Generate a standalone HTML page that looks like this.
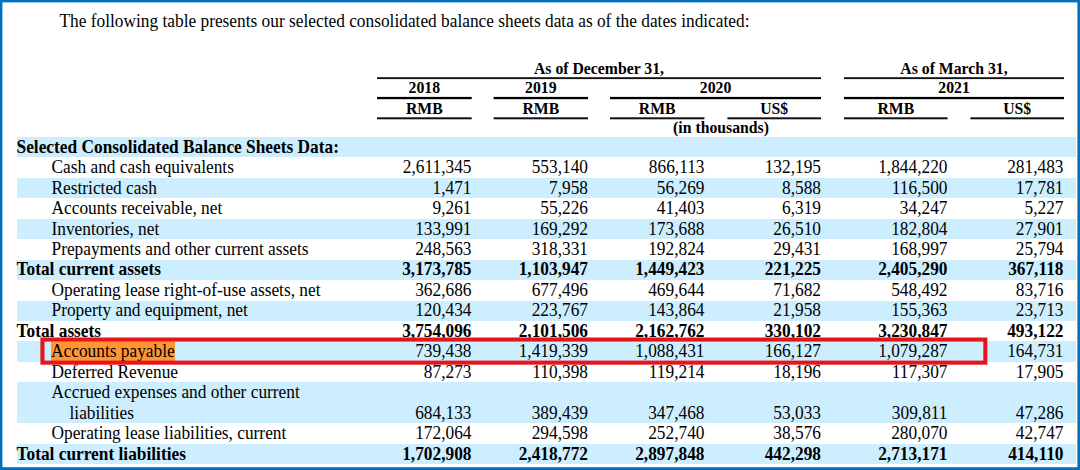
<!DOCTYPE html>
<html><head><meta charset="utf-8">
<style>
html,body{margin:0;padding:0;}
body{width:1080px;height:470px;position:relative;overflow:hidden;background:#fff;
 font-family:"Liberation Serif", serif;color:#000;}
.frame{position:absolute;left:0;top:0;width:1080px;height:470px;box-sizing:border-box;border:3px solid #0070c0;border-top-width:2.5px;border-left-width:2.5px;z-index:10;pointer-events:none}
.t{position:absolute;white-space:nowrap;font-size:17.33px;line-height:20px;transform:scaleY(1.035);transform-origin:0 15.85px}
.b{font-weight:bold}
.h{position:absolute;white-space:nowrap;font-size:15.75px;line-height:18px;font-weight:bold}
.band{position:absolute;left:17px;width:1059px;background:#cceeff}
.ln{position:absolute;background:#000;}
.r{text-align:right}
.hl{background:#ff9632}
.box{position:absolute;border:4px solid #e8141c;box-sizing:border-box;z-index:5}
</style></head><body>
<svg style="position:absolute;left:0;top:0;z-index:10" width="1080" height="470"><rect x="0" y="0" width="1080" height="2.4" fill="#0070c0"/><rect x="0" y="0" width="2.4" height="470" fill="#0070c0"/><rect x="1077.4" y="0" width="2.6" height="470" fill="#0070c0"/><rect x="0" y="467.2" width="1080" height="2.8" fill="#0070c0"/></svg>

<div class="t" style="left:59.5px;font-size:17.33px;top:12.00px">The following table presents our selected consolidated balance sheets data as of the dates indicated:</div>
<div class="h" style="left:377.0px;width:444.0px;top:59.78px;text-align:center">As of December 31,</div>
<div class="h" style="left:844.0px;width:220.0px;top:59.78px;text-align:center">As of March 31,</div>
<div class="h" style="left:377.0px;width:94.7px;top:79.28px;text-align:center">2018</div>
<div class="h" style="left:493.6px;width:94.4px;top:79.28px;text-align:center">2019</div>
<div class="h" style="left:610.0px;width:211.0px;top:79.28px;text-align:center">2020</div>
<div class="h" style="left:844.0px;width:220.0px;top:79.28px;text-align:center">2021</div>
<div class="h" style="left:377.0px;width:94.7px;top:99.68px;text-align:center">RMB</div>
<div class="h" style="left:493.6px;width:94.4px;top:99.68px;text-align:center">RMB</div>
<div class="h" style="left:610.0px;width:94.4px;top:99.68px;text-align:center">RMB</div>
<div class="h" style="left:727.4px;width:93.6px;top:99.68px;text-align:center">US$</div>
<div class="h" style="left:844.0px;width:103.6px;top:99.68px;text-align:center">RMB</div>
<div class="h" style="left:970.4px;width:93.6px;top:99.68px;text-align:center">US$</div>
<svg style="position:absolute;left:0;top:0" width="1080" height="140"><rect x="377.00" y="77.20" width="444.00" height="1.90" fill="#111"/><rect x="844.00" y="77.20" width="220.00" height="1.90" fill="#111"/><rect x="377.00" y="96.90" width="94.70" height="2.30" fill="#000"/><rect x="493.60" y="96.90" width="94.40" height="2.30" fill="#000"/><rect x="610.00" y="96.90" width="211.00" height="2.30" fill="#000"/><rect x="844.00" y="96.90" width="220.00" height="2.30" fill="#000"/><rect x="377.00" y="117.30" width="94.70" height="2.00" fill="#111"/><rect x="493.60" y="117.30" width="94.40" height="2.00" fill="#111"/><rect x="610.00" y="117.30" width="94.40" height="2.00" fill="#111"/><rect x="727.40" y="117.30" width="93.60" height="2.00" fill="#111"/><rect x="844.00" y="117.30" width="103.60" height="2.00" fill="#111"/><rect x="970.40" y="117.30" width="93.60" height="2.00" fill="#111"/></svg>
<div class="h" style="left:615.5px;width:211.0px;top:119.28px;text-align:center">(in thousands)</div>
<div class="band" style="top:136.90px;height:20.45px"></div>
<div class="t b" style="left:16.5px;top:137.75px">Selected Consolidated Balance Sheets Data:</div>
<div class="t" style="left:51.5px;top:158.20px">Cash and cash equivalents</div>
<div class="t r" style="left:351.5px;width:120px;top:158.20px">2,611,345</div>
<div class="t r" style="left:468.0px;width:120px;top:158.20px">553,140</div>
<div class="t r" style="left:584.5px;width:120px;top:158.20px">866,113</div>
<div class="t r" style="left:701.0px;width:120px;top:158.20px">132,195</div>
<div class="t r" style="left:827.5px;width:120px;top:158.20px">1,844,220</div>
<div class="t r" style="left:943.5px;width:120px;top:158.20px">281,483</div>
<div class="band" style="top:177.80px;height:20.45px"></div>
<div class="t" style="left:51.5px;top:178.65px">Restricted cash</div>
<div class="t r" style="left:351.5px;width:120px;top:178.65px">1,471</div>
<div class="t r" style="left:468.0px;width:120px;top:178.65px">7,958</div>
<div class="t r" style="left:584.5px;width:120px;top:178.65px">56,269</div>
<div class="t r" style="left:701.0px;width:120px;top:178.65px">8,588</div>
<div class="t r" style="left:827.5px;width:120px;top:178.65px">116,500</div>
<div class="t r" style="left:943.5px;width:120px;top:178.65px">17,781</div>
<div class="t" style="left:51.5px;top:199.10px">Accounts receivable, net</div>
<div class="t r" style="left:351.5px;width:120px;top:199.10px">9,261</div>
<div class="t r" style="left:468.0px;width:120px;top:199.10px">55,226</div>
<div class="t r" style="left:584.5px;width:120px;top:199.10px">41,403</div>
<div class="t r" style="left:701.0px;width:120px;top:199.10px">6,319</div>
<div class="t r" style="left:827.5px;width:120px;top:199.10px">34,247</div>
<div class="t r" style="left:943.5px;width:120px;top:199.10px">5,227</div>
<div class="band" style="top:218.70px;height:20.45px"></div>
<div class="t" style="left:51.5px;top:219.55px">Inventories, net</div>
<div class="t r" style="left:351.5px;width:120px;top:219.55px">133,991</div>
<div class="t r" style="left:468.0px;width:120px;top:219.55px">169,292</div>
<div class="t r" style="left:584.5px;width:120px;top:219.55px">173,688</div>
<div class="t r" style="left:701.0px;width:120px;top:219.55px">26,510</div>
<div class="t r" style="left:827.5px;width:120px;top:219.55px">182,804</div>
<div class="t r" style="left:943.5px;width:120px;top:219.55px">27,901</div>
<div class="t" style="left:51.5px;top:240.00px">Prepayments and other current assets</div>
<div class="t r" style="left:351.5px;width:120px;top:240.00px">248,563</div>
<div class="t r" style="left:468.0px;width:120px;top:240.00px">318,331</div>
<div class="t r" style="left:584.5px;width:120px;top:240.00px">192,824</div>
<div class="t r" style="left:701.0px;width:120px;top:240.00px">29,431</div>
<div class="t r" style="left:827.5px;width:120px;top:240.00px">168,997</div>
<div class="t r" style="left:943.5px;width:120px;top:240.00px">25,794</div>
<div class="band" style="top:259.60px;height:20.45px"></div>
<div class="t b" style="left:16.5px;top:260.45px">Total current assets</div>
<div class="t b r" style="left:351.5px;width:120px;top:260.45px">3,173,785</div>
<div class="t b r" style="left:468.0px;width:120px;top:260.45px">1,103,947</div>
<div class="t b r" style="left:584.5px;width:120px;top:260.45px">1,449,423</div>
<div class="t b r" style="left:701.0px;width:120px;top:260.45px">221,225</div>
<div class="t b r" style="left:827.5px;width:120px;top:260.45px">2,405,290</div>
<div class="t b r" style="left:943.5px;width:120px;top:260.45px">367,118</div>
<div class="t" style="left:51.5px;top:280.90px">Operating lease right-of-use assets, net</div>
<div class="t r" style="left:351.5px;width:120px;top:280.90px">362,686</div>
<div class="t r" style="left:468.0px;width:120px;top:280.90px">677,496</div>
<div class="t r" style="left:584.5px;width:120px;top:280.90px">469,644</div>
<div class="t r" style="left:701.0px;width:120px;top:280.90px">71,682</div>
<div class="t r" style="left:827.5px;width:120px;top:280.90px">548,492</div>
<div class="t r" style="left:943.5px;width:120px;top:280.90px">83,716</div>
<div class="band" style="top:300.50px;height:20.45px"></div>
<div class="t" style="left:51.5px;top:301.35px">Property and equipment, net</div>
<div class="t r" style="left:351.5px;width:120px;top:301.35px">120,434</div>
<div class="t r" style="left:468.0px;width:120px;top:301.35px">223,767</div>
<div class="t r" style="left:584.5px;width:120px;top:301.35px">143,864</div>
<div class="t r" style="left:701.0px;width:120px;top:301.35px">21,958</div>
<div class="t r" style="left:827.5px;width:120px;top:301.35px">155,363</div>
<div class="t r" style="left:943.5px;width:120px;top:301.35px">23,713</div>
<div class="t b" style="left:16.5px;top:321.80px">Total assets</div>
<div class="t b r" style="left:351.5px;width:120px;top:321.80px">3,754,096</div>
<div class="t b r" style="left:468.0px;width:120px;top:321.80px">2,101,506</div>
<div class="t b r" style="left:584.5px;width:120px;top:321.80px">2,162,762</div>
<div class="t b r" style="left:701.0px;width:120px;top:321.80px">330,102</div>
<div class="t b r" style="left:827.5px;width:120px;top:321.80px">3,230,847</div>
<div class="t b r" style="left:943.5px;width:120px;top:321.80px">493,122</div>
<div class="band" style="top:341.40px;height:20.45px"></div>
<div class="t" style="left:51.0px;top:342.25px"><span class="hl" style="display:inline-block;line-height:19px;padding:0 0.5px 0 0">Accounts payable</span></div>
<div class="t r" style="left:351.5px;width:120px;top:342.25px">739,438</div>
<div class="t r" style="left:468.0px;width:120px;top:342.25px">1,419,339</div>
<div class="t r" style="left:584.5px;width:120px;top:342.25px">1,088,431</div>
<div class="t r" style="left:701.0px;width:120px;top:342.25px">166,127</div>
<div class="t r" style="left:827.5px;width:120px;top:342.25px">1,079,287</div>
<div class="t r" style="left:943.5px;width:120px;top:342.25px">164,731</div>
<div class="t" style="left:51.5px;top:362.70px">Deferred Revenue</div>
<div class="t r" style="left:351.5px;width:120px;top:362.70px">87,273</div>
<div class="t r" style="left:468.0px;width:120px;top:362.70px">110,398</div>
<div class="t r" style="left:584.5px;width:120px;top:362.70px">119,214</div>
<div class="t r" style="left:701.0px;width:120px;top:362.70px">18,196</div>
<div class="t r" style="left:827.5px;width:120px;top:362.70px">117,307</div>
<div class="t r" style="left:943.5px;width:120px;top:362.70px">17,905</div>
<div class="band" style="top:382.30px;height:40.90px"></div>
<div class="t" style="left:51.5px;top:383.15px">Accrued expenses and other current</div>
<div class="t" style="left:69.5px;top:403.60px">liabilities</div>
<div class="t r" style="left:351.5px;width:120px;top:403.60px">684,133</div>
<div class="t r" style="left:468.0px;width:120px;top:403.60px">389,439</div>
<div class="t r" style="left:584.5px;width:120px;top:403.60px">347,468</div>
<div class="t r" style="left:701.0px;width:120px;top:403.60px">53,033</div>
<div class="t r" style="left:827.5px;width:120px;top:403.60px">309,811</div>
<div class="t r" style="left:943.5px;width:120px;top:403.60px">47,286</div>
<div class="t" style="left:51.5px;top:424.05px">Operating lease liabilities, current</div>
<div class="t r" style="left:351.5px;width:120px;top:424.05px">172,064</div>
<div class="t r" style="left:468.0px;width:120px;top:424.05px">294,598</div>
<div class="t r" style="left:584.5px;width:120px;top:424.05px">252,740</div>
<div class="t r" style="left:701.0px;width:120px;top:424.05px">38,576</div>
<div class="t r" style="left:827.5px;width:120px;top:424.05px">280,070</div>
<div class="t r" style="left:943.5px;width:120px;top:424.05px">42,747</div>
<div class="band" style="top:443.65px;height:20.45px"></div>
<div class="t b" style="left:16.5px;top:444.50px">Total current liabilities</div>
<div class="t b r" style="left:351.5px;width:120px;top:444.50px">1,702,908</div>
<div class="t b r" style="left:468.0px;width:120px;top:444.50px">2,418,772</div>
<div class="t b r" style="left:584.5px;width:120px;top:444.50px">2,897,848</div>
<div class="t b r" style="left:701.0px;width:120px;top:444.50px">442,298</div>
<div class="t b r" style="left:827.5px;width:120px;top:444.50px">2,713,171</div>
<div class="t b r" style="left:943.5px;width:120px;top:444.50px">414,110</div>
<svg style="position:absolute;left:0;top:0;z-index:5" width="1080" height="470"><rect x="42.45" y="339.55" width="942.9" height="23.1" fill="none" stroke="#e8141c" stroke-width="4.1"/></svg>
</body></html>
